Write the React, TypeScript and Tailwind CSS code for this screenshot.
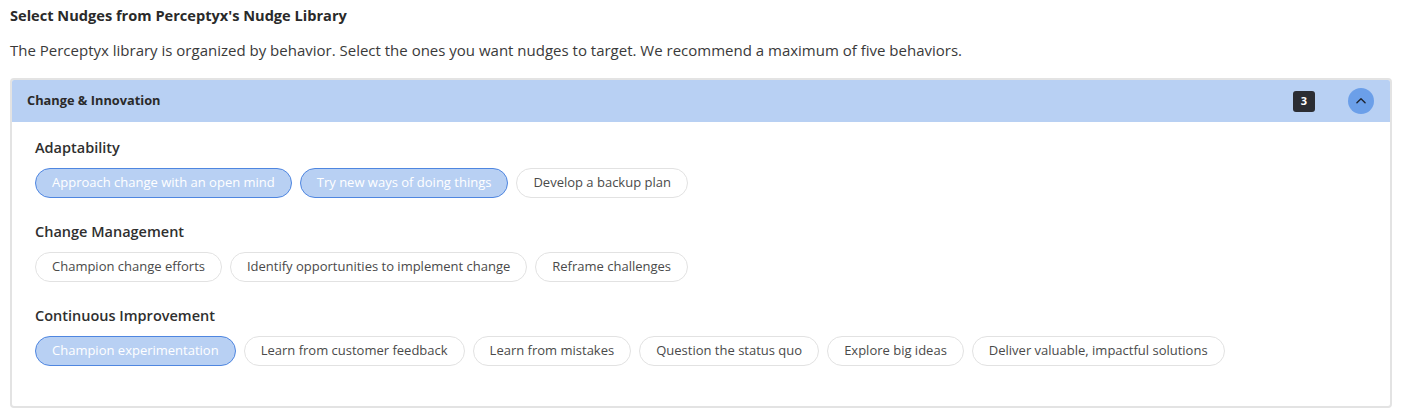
import React from 'react';

type Group = {
  title: string;
  nudges: { label: string; selected?: boolean }[];
};

const groups: Group[] = [
  {
    title: 'Adaptability',
    nudges: [
      { label: 'Approach change with an open mind', selected: true },
      { label: 'Try new ways of doing things', selected: true },
      { label: 'Develop a backup plan' },
    ],
  },
  {
    title: 'Change Management',
    nudges: [
      { label: 'Champion change efforts' },
      { label: 'Identify opportunities to implement change' },
      { label: 'Reframe challenges' },
    ],
  },
  {
    title: 'Continuous Improvement',
    nudges: [
      { label: 'Champion experimentation', selected: true },
      { label: 'Learn from customer feedback' },
      { label: 'Learn from mistakes' },
      { label: 'Question the status quo' },
      { label: 'Explore big ideas' },
      { label: 'Deliver valuable, impactful solutions' },
    ],
  },
];

const Chip = ({ label, selected }: { label: string; selected?: boolean }) => (
  <button
    className={
      selected
        ? 'h-[30px] rounded-full border border-[#4f86e0] bg-[#b8d0f3] px-[16px] text-[13px] text-white'
        : 'h-[30px] rounded-full border border-[#e2e2e2] bg-white px-[16px] text-[13px] text-[#4a4a4a]'
    }
  >
    {label}
  </button>
);

export default function App() {
  const selectedCount = groups.reduce(
    (n, g) => n + g.nudges.filter((x) => x.selected).length,
    0
  );

  return (
    <div className="min-h-screen bg-white px-[10px] pt-[5px] font-['Open_Sans',sans-serif] text-[#2d2d2d]">
      <h2 className="text-[14.6px] font-bold leading-[20px] text-[#2a2a2a]">
        Select Nudges from Perceptyx's Nudge Library
      </h2>
      <p className="mt-[15px] text-[15px] leading-[20px] text-[#3a3a3a]">
        The Perceptyx library is organized by behavior. Select the ones you want nudges to target. We recommend a
        maximum of five behaviors.
      </p>

      {/* Behavior category panel */}
      <div className="mt-[18px] overflow-hidden rounded-[4px] border-2 border-[#e3e3e3]">
        <div className="flex h-[42px] items-center bg-[#b8d0f3] pl-[15px] pr-[16px]">
          <span className="flex-1 text-[12.8px] font-bold text-[#2a2a2a]">Change &amp; Innovation</span>
          <span className="flex h-[21px] w-[22px] items-center justify-center rounded-[3px] bg-[#2b2d33] text-[11px] font-bold text-white">
            {selectedCount}
          </span>
          <button className="ml-[33px] flex h-[26px] w-[26px] items-center justify-center rounded-full bg-[#6b9fe9]">
            <svg width="14" height="14" viewBox="0 0 24 24" fill="none" stroke="#1f2430" strokeWidth="2.4" strokeLinecap="round" strokeLinejoin="round">
              <path d="M5 15l7-7 7 7" />
            </svg>
          </button>
        </div>

        <div className="flex flex-col gap-[24px] px-[23px] pb-[40px] pt-[16px]">
          {groups.map((g) => (
            <div key={g.title}>
              <h3 className="text-[14.5px] font-semibold leading-[20px] text-[#2f2f2f]">{g.title}</h3>
              <div className="mt-[10px] flex flex-wrap gap-[8px]">
                {g.nudges.map((n) => (
                  <Chip key={n.label} label={n.label} selected={n.selected} />
                ))}
              </div>
            </div>
          ))}
        </div>
      </div>
    </div>
  );
}
